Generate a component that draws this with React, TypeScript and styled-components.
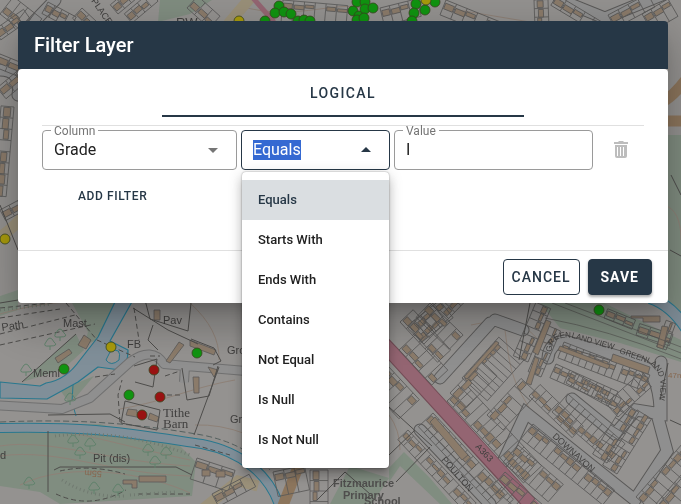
import React, { useEffect, useRef, useState } from "react";
import styled, { createGlobalStyle, css } from "styled-components";

const navy = "#263746";

const GlobalStyle = createGlobalStyle`
  *, *::before, *::after { box-sizing: border-box; }
  body {
    margin: 0;
    min-height: 100vh;
    background: #949290;
    font-family: Roboto, "Liberation Sans", sans-serif;
    color: #212121;
  }
`;

/* ---------- map ---------- */

const MapCanvas = styled.svg`
  position: fixed;
  inset: 0;
  width: 100%;
  height: 100%;
  display: block;
  font-family: "Liberation Sans", sans-serif;
  fill: none;
`;

const line = "#5a5958";
const roof = "#8b7b6a";
const road = "#8f8f8f";
const grass = "#808d80";
const water = "#808f99";
const bank = "#28788f";

type TerraceProps = {
  x: number;
  y: number;
  len: number;
  angle: number;
  n: number;
  depth: number;
  house?: number;
};

/** A row of land parcels with a house at the street end of each. */
function Terrace({ x, y, len, angle, n, depth, house = 7 }: TerraceProps) {
  const step = len / n;
  const dir = depth < 0 ? -1 : 1;
  const d = Math.abs(depth);
  let parcels = `M0 0H${len}V${depth}H0Z`;
  let roofs = "";
  for (let i = 0; i < n; i++) {
    if (i) parcels += `M${i * step} 0V${depth}`;
    if (i % 5 === 3) continue;
    const w = step - (i % 2 ? 1 : 2);
    const h = house - 1 - (i % 3);
    const top = dir * (3 + (i % 2));
    if (d > house + 3) roofs += `M${i * step + 1} ${top}h${w}v${dir * h}h${-w}z`;
  }
  return (
    <g transform={`translate(${x} ${y}) rotate(${angle})`} stroke={line} strokeWidth=".8">
      <path d={parcels} />
      <path d={roofs} fill={roof} />
    </g>
  );
}

const terraces: TerraceProps[] = [
  // south east, beside the main road
  { x: 399, y: 350, len: 48, angle: 47, n: 5, depth: -22 },
  { x: 447, y: 401, len: 112, angle: 47, n: 13, depth: -25, house: 8 },
  { x: 388, y: 366, len: 46, angle: 47, n: 5, depth: 28, house: 8 },
  { x: 433, y: 413, len: 118, angle: 47, n: 14, depth: 20, house: 8 },
  { x: 408, y: 430, len: 100, angle: 47, n: 12, depth: 14, house: 6 },
  { x: 424, y: 344, len: 62, angle: -46, n: 7, depth: -22 },
  { x: 408, y: 325, len: 40, angle: -38, n: 5, depth: 22 },
  { x: 400, y: 322, len: 55, angle: 47, n: 6, depth: -18 },
  { x: 430, y: 303, len: 46, angle: 44, n: 5, depth: 20 },
  { x: 462, y: 378, len: 55, angle: -48, n: 9, depth: 34, house: 6 },
  { x: 450, y: 393, len: 45, angle: -46, n: 4, depth: 22 },
  { x: 487, y: 415, len: 50, angle: -47, n: 5, depth: 22 },
  { x: 528, y: 362, len: 58, angle: -67, n: 7, depth: -16, house: 6 },
  { x: 541, y: 377, len: 50, angle: -67, n: 6, depth: -14, house: 5 },
  { x: 529, y: 396, len: 60, angle: 44, n: 7, depth: -16, house: 6 },
  { x: 533, y: 424, len: 105, angle: 39, n: 13, depth: 19, house: 7 },
  { x: 552, y: 412, len: 76, angle: 41, n: 10, depth: -24, house: 7 },
  { x: 518, y: 445, len: 60, angle: 41, n: 7, depth: 23, house: 7 },
  { x: 505, y: 472, len: 50, angle: 41, n: 5, depth: 20, house: 7 },
  { x: 564, y: 342, len: 92, angle: 21, n: 13, depth: 17, house: 6 },
  { x: 556, y: 364, len: 68, angle: 24, n: 9, depth: 15, house: 6 },
  { x: 566, y: 383, len: 56, angle: 29, n: 7, depth: -13, house: 5 },
  { x: 618, y: 417, len: 45, angle: -42, n: 6, depth: -18, house: 6 },
  { x: 617, y: 474, len: 65, angle: -58, n: 8, depth: -17, house: 6 },
  { x: 607, y: 463, len: 60, angle: -58, n: 7, depth: -17, house: 6 },
  { x: 636, y: 497, len: 70, angle: -49, n: 8, depth: 22, house: 7 },
  { x: 655, y: 505, len: 50, angle: -49, n: 5, depth: 22, house: 7 },
  { x: 604, y: 318, len: 30, angle: 22, n: 3, depth: -10, house: 6 },
  { x: 636, y: 335, len: 35, angle: 18, n: 3, depth: -12, house: 7 },
  { x: 666, y: 350, len: 28, angle: -70, n: 3, depth: -10, house: 5 },
  // top strip
  { x: 0, y: 14, len: 36, angle: 38, n: 4, depth: -22 },
  { x: 48, y: 2, len: 32, angle: 28, n: 4, depth: 13 },
  { x: 82, y: 8, len: 38, angle: 43, n: 4, depth: 14 },
  { x: 118, y: 14, len: 35, angle: -40, n: 4, depth: -12 },
  { x: 132, y: 23, len: 34, angle: -40, n: 4, depth: -12 },
  { x: 187, y: 8, len: 30, angle: 42, n: 3, depth: -16 },
  { x: 283, y: 0, len: 65, angle: 5, n: 6, depth: 26, house: 6 },
  { x: 380, y: 8, len: 38, angle: -14, n: 4, depth: 18 },
  { x: 446, y: 0, len: 80, angle: 22, n: 7, depth: 16 },
  { x: 534, y: 0, len: 26, angle: 88, n: 3, depth: -14 },
  { x: 557, y: -5, len: 55, angle: 31, n: 5, depth: 12 },
  { x: 608, y: 15, len: 45, angle: -28, n: 4, depth: 15 },
  { x: 642, y: 14, len: 30, angle: -30, n: 3, depth: 20 },
  // left edge
  { x: -6, y: 30, len: 36, angle: -35, n: 4, depth: 12 },
  { x: 0, y: 54, len: 34, angle: 22, n: 3, depth: 14 },
  { x: -3, y: 88, len: 34, angle: -40, n: 3, depth: 14 },
  { x: 14, y: 107, len: 90, angle: 95, n: 8, depth: 13, house: 8 },
  { x: 0, y: 210, len: 30, angle: -28, n: 3, depth: 12 },
  // south centre
  { x: 197, y: 458, len: 40, angle: 18, n: 3, depth: 22 },
  { x: 212, y: 494, len: 42, angle: -28, n: 4, depth: 14 },
  { x: 273, y: 472, len: 32, angle: -12, n: 3, depth: 25 },
  { x: 310, y: 470, len: 42, angle: 90, n: 4, depth: -18 },
];

const trees = [[73, 441], [90, 444], [80, 453], [148, 450], [166, 453], [155, 462], [29, 483], [94, 488], [118, 490], [26, 370], [50, 344], [60, 335], [70, 399]];

const markers: [number, number, "g" | "y" | "r"][] = [
  [279, 6, "g"], [275, 13, "g"], [284, 12, "g"], [291, 14, "g"], [265, 21, "g"], [298, 21, "g"], [304, 20, "g"], [310, 21, "g"], [239, 21, "y"],
  [357, 2, "g"], [365, 2, "g"], [353, 11, "g"], [359, 16, "g"], [365, 9, "g"], [373, 8, "g"], [357, 20, "g"], [364, 18, "g"],
  [416, 4, "g"], [435, 2, "g"], [425, 10, "g"], [414, 13, "g"], [412, 21, "g"], [426, 0, "y"],
  [5, 239, "y"], [111, 347, "y"], [64, 369, "g"], [197, 353, "g"], [129, 395, "g"], [154, 370, "r"], [160, 397, "r"], [142, 415, "r"], [599, 310, "g"],
];
const markerFill = { g: "#109410", y: "#a99b0c", r: "#991212" };

function TownMap() {
  return (
    <MapCanvas viewBox="0 0 681 504" preserveAspectRatio="xMinYMin slice" aria-hidden="true">
      <path fill="#949290" d="M0 0H681V504H0Z" />
      <g fill={grass}>
        <path d="M72 303L120 300 112 326 96 340 84 346 88 332ZM76 334L22 382 62 370 84 350ZM60 390L94 376 70 404ZM0 426L100 424 180 446 196 462 192 496 60 504 40 492 0 486Z" />
        <path d="M160 0H212L190 14 158 22ZM540 303H604L681 340V362L620 343 560 328ZM664 135H681V330L664 300ZM389 468L404 452 430 478 452 504H440L400 466 389 482Z" />
        <path d="M330 504L350 466 389 478 372 504Z" />
        <path d="M0 296L18 290V310L0 316Z" />
      </g>
      <g stroke="#8e8177" strokeWidth="1">
        <path d="M0 431C60 424 80 436 190 460M0 446C50 438 110 462 190 466M0 456C60 448 110 474 190 476M20 485C70 460 150 474 190 493M0 314C60 296 110 302 120 303M120 409C170 400 190 388 235 380M190 303Q220 330 219 360M195 425Q220 424 246 434M505 330C510 370 512 380 530 409M471 325C540 310 530 350 552 342M389 415Q400 430 400 450" />
        <path d="M240 6C300 24 340 -5 375 12M446 8L530 22M664 205Q681 210 681 240" />
      </g>

      <g strokeLinejoin="round">
        <path fill={water} stroke={bank} strokeWidth="1.2" d="M116 300L98 337 80 360Q66 380 46 383L40 386 0 382V398L47 399 78 382 98 367 120 370Q128 366 128 350L110 341 133 300Z" />
        <path d="M110 352Q122 346 119 360 111 367 106 360Z" fill="#949290" stroke={bank} />
        <path d="M73 385L72 402 76 416" stroke={bank} />
        <path stroke={bank} strokeWidth="10" d="M-4 428C90 426 120 432 202 444 242 452 270 475 280 508" />
        <path stroke={water} strokeWidth="8" d="M-4 428C90 426 120 432 202 444 242 452 270 475 280 508" />
        <path stroke="#54605f" strokeWidth="1" strokeDasharray="6 3" d="M0 422C90 418 150 426 202 435Q244 443 270 470" />
        <path stroke={bank} strokeWidth="12" d="M650 298Q674 306 690 335" />
        <path stroke={water} strokeWidth="10" d="M650 298Q674 306 690 335" />
      </g>

      <g stroke={line} strokeWidth="13" strokeLinecap="round">
        <path d="M490 323L440 378M495 320L523 330M503 462L526 413 635 500M420 430L490 504M638 495L667 451 657 414M661 362V414L636 410 615 434 572 399M548 358Q549 343 565 341L638 362Q658 371 660 408" />
        <path d="M0 70Q22 70 18 95M55 0L30 26M560 0L605 18 664 -6" />
      </g>
      <path stroke="#707070" strokeWidth="10" strokeLinejoin="round" d="M-8 405L62 409 90 398 130 362Q152 346 164 364L186 366 246 371M185 366L184 382" />
      <path stroke={road} strokeWidth="8" strokeLinejoin="round" d="M-8 405L62 409 90 398 130 362Q152 346 164 364L186 366 246 371M185 366L184 383" />
      <g stroke={road} strokeWidth="11" strokeLinecap="round">
        <path d="M490 323L440 378M495 320L523 330M503 462L526 413 635 500M420 430L490 504M638 495L667 451 657 414M661 362V414L636 410 615 434 572 399M548 358Q549 343 565 341L638 362Q658 371 660 408" />
        <path d="M0 70Q22 70 18 95M55 0L30 26M560 0L605 18 664 -6" />
      </g>
      <path stroke="#9a9079" strokeWidth="11" d="M194 516L238 481 258 486M-5 240Q12 230 24 215M228 24L252 -4" />
      <path stroke="#8c755c" strokeWidth="11" d="M282 508L300 462M664 101Q676 94 690 74M660 121H690" />
      <path stroke="#744d57" strokeWidth="15" d="M375 335L394 355 530 504" />
      <path stroke="#946572" strokeWidth="13" d="M375 335L394 355 535 509" />
      <path stroke="#946572" strokeWidth="5" d="M253 -2L274 22" />

      {terraces.map((t, i) => <Terrace key={i} {...t} />)}

      <g fill={roof} stroke={line} strokeWidth=".8">
        <path d="M55 358L69 349 72 353 58 363ZM78 345L84 335 91 340 86 349ZM154 310H160V320H154ZM128 409L137 410V413L142 414V418L126 415ZM150 413L159 417 157 422 148 419ZM123 480H137V488H132V484H123ZM139 476H166V482H139ZM193 377H199V393H194ZM208 367L218 370 214 377ZM190 340L216 350 214 355 190 346ZM166 361L179 342 184 345 170 363ZM202 470H210V476H202ZM216 471H225V477H216Z" />
        <path d="M464 377L496 341 499 343 467 379ZM533 352L546 320 551 322 538 355ZM526 383L535 357 539 359 531 385ZM560 346L610 365 608 369 558 350ZM613 354L650 367 648 374 611 361ZM435 417L468 455 462 460 430 422ZM662 326L668 327 663 349 657 347ZM631 316H660V322H643V318H631Z" />
      </g>
      <g stroke="#4e4d4b" strokeWidth="1">
        <path d="M145 300L150 319 188 331 191 303M153 325L148 340 158 350M133 308L168 330 198 344M22 382L76 334M191 339L214 348 221 361 213 365M182 368L187 400 209 396 218 366M194 435L219 367M134 366L157 359 153 387 135 382M125 401L160 410 157 430 121 423ZM48 415L110 414 125 422M48 431V492M54 470L60 467H176L192 475" />
        <path d="M0 308L60 302 120 300M0 318L60 309M134 308L139 340M120 422L118 395 122 380M0 334L75 315M0 345L95 324M66 303L97 340 135 357M167 395H183M165 376L180 371M150 356H160M95 377L115 374M56 494Q90 510 126 490M60 471Q90 464 125 474M195 445L230 455M138 494H190" strokeDasharray="5 3" />
        <path d="M552 303L681 353M565 303L681 347M545 318Q606 329 681 359" opacity=".6" />
        <path d="M389 407L432 446M389 455L415 430M396 482L430 447M668 363L660 400M670 250L681 256M671 175L681 195M18 250L0 205M0 303L18 300M317 500L345 472 370 494M530 303L519 360M670 420L681 425" />
      </g>
      <g stroke="#707a70" strokeDasharray="1 3" strokeWidth="3">
        <path d="M55 436Q120 428 190 455M62 480Q90 498 125 496M130 495L175 492M0 310L50 304" />
      </g>
      <g stroke="#61826c" strokeWidth="1">
        {trees.map(([x, y]) => (
          <path key={`${x}-${y}`} d={`M${x} ${y + 6}v-4q-8 1-4-4q4-8 8 0q5 4-4 4`} />
        ))}
      </g>

      <g fill="#403f3e" fontSize="11">
        <text transform="translate(2 331) rotate(-8)">Path</text>
        <text x="63" y="327">Mast</text>
        <text x="163" y="324">Pav</text>
        <text x="127" y="348">FB</text>
        <text x="33" y="377">Meml</text>
        <text x="227" y="354">Gro</text>
        <text x="230" y="423">Gro</text>
        <text x="93" y="462">Pit (dis)</text>
        <text x="0" y="459">d</text>
        <g fontFamily="Liberation Serif" fontSize="13">
          <text x="163" y="417">Tithe</text>
          <text x="163" y="428">Barn</text>
        </g>
        <text x="176" y="27" fontSize="13">RW</text>
        <text transform="translate(91 1) rotate(55)" fontSize="9">PLACE</text>
        <text transform="translate(475 447) rotate(47)" fontSize="9">A363</text>
        <text transform="translate(441 460) rotate(49)" fontSize="9">POULTON</text>
        <text transform="translate(552 437) rotate(42)" fontSize="9">DOWNAVON</text>
      </g>
      <path id="view-west" d="M552 352Q550 335 573 338L625 353" />
      <path id="view-east" d="M619 353L648 363Q666 372 658 404" />
      <g fill="#403f3e" fontSize="8">
        <text><textPath href="#view-west">GREENLAND VIEW</textPath></text>
        <text><textPath href="#view-east">GREENLAND VIEW</textPath></text>
      </g>
      <g fill="#86674f" fontSize="8">
        <text x="668" y="378">47m</text>
        <text transform="translate(102 471) rotate(183)" fontSize="9">55m</text>
      </g>
      <g fill="#4f4e4d" fontSize="11" fontWeight="700">
        <text x="333" y="487">Fitzmaurice</text>
        <text x="343" y="499">Primary</text>
        <text x="364" y="505">School</text>
      </g>

      {markers.map(([x, y, kind], i) => (
        <circle key={i} cx={x} cy={y} r="5" fill={markerFill[kind]} stroke="#39451e" strokeWidth=".8" />
      ))}
    </MapCanvas>
  );
}

/* ---------- dialog ---------- */

const Page = styled.main`
  position: relative;
  padding: 21px 13px 0 18px;
`;

const Dialog = styled.section`
  border-radius: 4px;
  box-shadow: 0 11px 15px -7px rgba(0, 0, 0, 0.2), 0 24px 38px 3px rgba(0, 0, 0, 0.14), 0 9px 46px 8px rgba(0, 0, 0, 0.12);
`;

const DialogHeader = styled.header`
  display: flex;
  align-items: center;
  height: 48px;
  padding: 0 16px;
  border-radius: 4px 4px 0 0;
  background: ${navy};
`;

const Title = styled.h1`
  margin: 0;
  font-size: 20px;
  font-weight: 500;
  line-height: 32px;
  color: #fff;
`;

const DialogBody = styled.div`
  background: #fff;
  border-radius: 4px;
`;

const Content = styled.div`
  padding: 0 24px 38px;
`;

const Tabs = styled.div`
  display: flex;
  justify-content: center;
  margin-bottom: 8px;
`;

const Tab = styled.button`
  width: 60%;
  height: 48px;
  padding: 2px 0 0;
  border: 0;
  border-bottom: 2px solid ${navy};
  background: none;
  color: ${navy};
  font: 500 14px/20px Roboto, sans-serif;
  letter-spacing: 0.1em;
  text-transform: uppercase;
  cursor: pointer;
`;

const FilterRow = styled.div`
  display: grid;
  grid-template-columns: 195fr 149fr 199fr 47px;
  gap: 4px;
  padding-top: 4px;
  border-top: 1px solid #e0e0e0;
`;

const Field = styled.div<{ $active?: boolean }>`
  position: relative;
  display: flex;
  align-items: center;
  height: 40px;
  border: 1px solid ${(p) => (p.$active ? navy : "#9a9a9a")};
  border-radius: 4px;
  color: ${(p) => (p.$active ? navy : "#757575")};
`;

const FieldLabel = styled.label`
  position: absolute;
  top: -5px;
  left: 8px;
  padding: 0 3px;
  background: #fff;
  font-size: 12px;
  line-height: 10px;
  color: #757575;
`;

const controlText = css`
  width: 100%;
  min-width: 0;
  padding: 0 11px;
  border: 0;
  outline: 0;
  background: none;
  color: #212121;
  font: 400 16px/20px Roboto, sans-serif;
`;

const Select = styled.select`
  ${controlText}
  height: 38px;
  appearance: none;
`;

const TextInput = styled.input`
  ${controlText}
  height: 20px;
  &::selection {
    background: rgba(51, 103, 209, 0.99);
    color: #fff;
  }
`;

const Arrow = styled.svg<{ $up?: boolean }>`
  position: absolute;
  right: 11px;
  width: 24px;
  height: 24px;
  pointer-events: none;
  fill: currentColor;
  transform: ${(p) => (p.$up ? "rotate(180deg)" : "none")};
`;

const Options = styled.ul`
  position: absolute;
  z-index: 2;
  top: 41px;
  left: 0;
  right: 0;
  margin: 0;
  padding: 8px 0;
  list-style: none;
  border-radius: 4px;
  background: #fff;
  box-shadow: 0 5px 5px -3px rgba(0, 0, 0, 0.2), 0 8px 10px 1px rgba(0, 0, 0, 0.14), 0 3px 14px 2px rgba(0, 0, 0, 0.12), 0 0 2px rgba(0, 0, 0, 0.4);
`;

const Option = styled.li<{ $selected: boolean }>`
  padding: 0 16px;
  font-size: 13px;
  font-weight: 500;
  line-height: 40px;
  color: ${(p) => (p.$selected ? navy : "#212121")};
  background: ${(p) => (p.$selected ? "#dadee1" : "transparent")};
  cursor: pointer;
`;

const IconButton = styled.button`
  display: flex;
  align-items: center;
  justify-content: center;
  padding: 0;
  border: 0;
  background: none;
  color: #bdbdbd;
  svg {
    width: 24px;
    height: 24px;
    fill: currentColor;
  }
`;

const AddButton = styled.button`
  display: block;
  margin-top: 10px;
  padding: 0 36px;
  border: 0;
  background: none;
  color: ${navy};
  font: 500 12px/32px Roboto, sans-serif;
  letter-spacing: 0.05em;
  text-transform: uppercase;
  cursor: pointer;
`;

const Actions = styled.footer`
  display: flex;
  justify-content: flex-end;
  gap: 8px;
  padding: 8px 16px;
  border-top: 1px solid #e0e0e0;
`;

const ActionButton = styled.button<{ $primary?: boolean }>`
  height: 36px;
  padding: 0 ${(p) => (p.$primary ? 12 : 8)}px;
  border: 1px solid ${navy};
  border-radius: 4px;
  background: ${(p) => (p.$primary ? navy : "#fff")};
  color: ${(p) => (p.$primary ? "#fff" : navy)};
  font: ${(p) => (p.$primary ? 700 : 500)} 14px/20px Roboto, sans-serif;
  letter-spacing: 1px;
  text-transform: uppercase;
  box-shadow: ${(p) => (p.$primary ? "0 2px 3px rgba(0, 0, 0, 0.35)" : "none")};
  cursor: pointer;
`;

const operators = ["Equals", "Starts With", "Ends With", "Contains", "Not Equal", "Is Null", "Is Not Null"];

export default function App() {
  const [operator, setOperator] = useState("Equals");
  const [value, setValue] = useState("I");
  const operatorRef = useRef<HTMLInputElement>(null);

  useEffect(() => {
    operatorRef.current?.focus();
    operatorRef.current?.select();
  }, []);

  return (
    <>
      <GlobalStyle />
      <TownMap />
      <Page>
        <Dialog role="dialog" aria-labelledby="filter-title">
          <DialogHeader>
            <Title id="filter-title">Filter Layer</Title>
          </DialogHeader>
          <DialogBody>
            <Content>
              <Tabs role="tablist">
                <Tab role="tab" aria-selected="true">Logical</Tab>
              </Tabs>
              <FilterRow>
                <Field>
                  <FieldLabel htmlFor="column">Column</FieldLabel>
                  <Select id="column" defaultValue="Grade">
                    <option>Grade</option>
                  </Select>
                  <Arrow viewBox="0 0 24 24"><path d="M7 10l5 5 5-5z" /></Arrow>
                </Field>
                <Field $active>
                  <TextInput
                    ref={operatorRef}
                    role="combobox"
                    aria-label="Operator"
                    aria-expanded="true"
                    aria-controls="operators"
                    value={operator}
                    onChange={(e) => setOperator(e.target.value)}
                  />
                  <Arrow $up viewBox="0 0 24 24"><path d="M7 10l5 5 5-5z" /></Arrow>
                  <Options id="operators" role="listbox" aria-label="Operator">
                    {operators.map((name) => (
                      <Option key={name} role="option" aria-selected={name === operator} $selected={name === operator} onClick={() => setOperator(name)}>
                        {name}
                      </Option>
                    ))}
                  </Options>
                </Field>
                <Field>
                  <FieldLabel htmlFor="value">Value</FieldLabel>
                  <TextInput id="value" value={value} onChange={(e) => setValue(e.target.value)} />
                </Field>
                <IconButton aria-label="Delete filter">
                  <svg viewBox="0 0 24 24">
                    <path fillRule="evenodd" d="M5 4h4l1-1h4l1 1h4v2H5zM6 7h12v11q0 2-2 2H8q-2 0-2-2zM8 9v9h1V9zm3 0v9h1V9zm3 0v9h1V9z" />
                  </svg>
                </IconButton>
              </FilterRow>
              <AddButton>Add Filter</AddButton>
            </Content>
            <Actions>
              <ActionButton>Cancel</ActionButton>
              <ActionButton $primary>Save</ActionButton>
            </Actions>
          </DialogBody>
        </Dialog>
      </Page>
    </>
  );
}
